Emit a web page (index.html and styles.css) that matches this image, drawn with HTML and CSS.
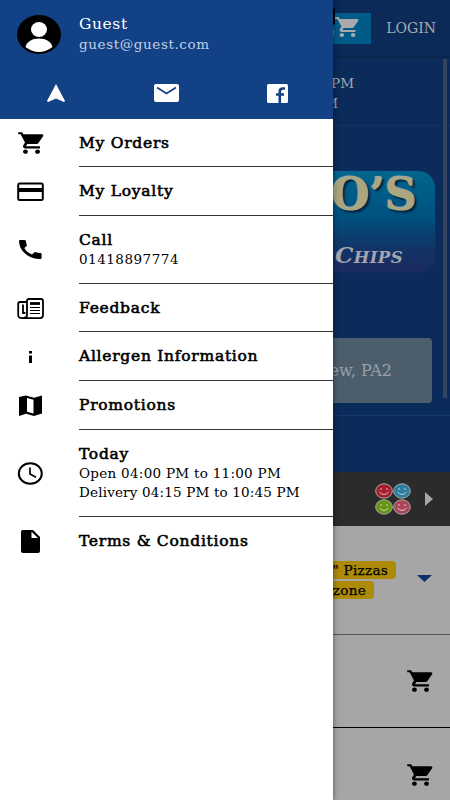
FILE: index.html
```html
<!DOCTYPE html>
<html lang="en">
<head>
  <meta charset="UTF-8">
  <meta name="viewport" content="width=device-width, initial-scale=1.0">
  <title>Menu</title>
  <link rel="stylesheet" href="styles.css">
</head>
<body>

  <svg class="sprite">
    <symbol id="cart" viewBox="0 0 24 24" preserveAspectRatio="none">
      <path d="M7 18c-1.1 0-2 .9-2 2s.9 2 2 2 2-.9 2-2-.9-2-2-2zM1 2v2h2l3.6 7.6-1.4 2.4C4.5 15.4 5.500 17 7 17h12v-2H7.400l1.150-2h7.450c.75 0 1.400-.4 1.750-1L21.700 5.500C22 4.800 21.500 4 20.700 4H5.200l-.9-2H1zm16 16c-1.100 0-2 .9-2 2s.9 2 2 2 2-.9 2-2-.9-2-2-2z"/>
    </symbol>
  </svg>

  <main class="page">
    <header class="topbar">
      <div class="basket"><span>0</span><svg><use href="#cart"/></svg><i class="badge"></i></div>
      <span class="login">LOGIN</span>
    </header>

    <section class="hero">
      <div class="times"><div>11:00 PM</div><div class="short">10:45 PM</div></div>
      <div class="brand">
        <div class="logo">
          <div class="logo-name">O’S</div>
          <div class="logo-sub"><b>C</b>HIPS</div>
        </div>
        <div class="address">Renfrew, PA2</div>
      </div>
      <div class="scrollbar"></div>
    </section>

    <div class="allergens">
      <svg class="faces" viewBox="0 0 36 32">
        <g stroke="#aaa" stroke-width="1">
          <ellipse cx="9" cy="8" rx="8.300" ry="7.200" fill="#a61d2b"/>
          <ellipse cx="27" cy="8" rx="8.300" ry="7.200" fill="#2a7fa0"/>
          <ellipse cx="9" cy="24" rx="8.300" ry="7.200" fill="#659510"/>
          <ellipse cx="27" cy="24" rx="8.300" ry="7.200" fill="#ac4656"/>
        </g>
        <g fill="none" stroke="#ccc" stroke-width="1">
          <path d="M6 5v2M12 5v2M4.500 9q4.500 5 9 0M24 5v2M30 5v2M22.500 9q4.500 5 9 0M6 21v2M12 21v2M4.500 25q4.500 5 9 0M24 21v2M30 21v2M22.500 25q4.500 5 9 0"/>
        </g>
      </svg>
      <svg class="next" viewBox="0 0 8 14"><path d="M0 0l8 7-8 7z"/></svg>
    </div>

    <div class="category">
      <div class="tags">
        <span class="tag">12" Pizzas</span>
        <span class="tag small">Calzone</span>
      </div>
      <svg class="expand" viewBox="0 0 15 7"><path d="M0 0h15L7.500 7z"/></svg>
    </div>
    <div class="product"><svg><use href="#cart"/></svg></div>
    <div class="product last"><svg><use href="#cart"/></svg></div>
  </main>

  <aside class="drawer">
    <div class="account">
      <div class="user">
        <svg class="avatar" viewBox="0 0 44 39">
          <ellipse cx="22" cy="19.500" rx="22" ry="19.500"/>
          <ellipse cx="22" cy="14.500" rx="8" ry="7.500" fill="#fff"/>
          <path d="M8.500 32C10 26.500 15 23.500 22 23.500S34 26.500 35.500 32Q29 37 22 37T8.500 32z" fill="#fff"/>
        </svg>
        <div>
          <div class="name">Guest</div>
          <div class="email">guest@guest.com</div>
        </div>
      </div>
      <div class="links">
        <svg class="nav-icon" viewBox="0 0 18 18"><path d="M9 0l9 17-1 1-8-3.500L1 18l-1-1z"/></svg>
        <svg class="mail-icon" viewBox="0 0 25 18"><rect width="25" height="18" rx="2"/><path d="M3 3.500l9.500 6 9.500-6" fill="none" stroke="#124186" stroke-width="1.800"/></svg>
        <svg class="fb-icon" viewBox="0 0 21 19"><rect width="21" height="19" rx="1.500"/><path d="M12.800 19v-8.500M9 10.500h8M12.800 11V7.500q0-3 3-3H18" fill="none" stroke="#124186" stroke-width="2.600"/></svg>
      </div>
    </div>

    <ul class="menu">
      <li class="item orders">
        <svg class="cart-icon"><use href="#cart"/></svg>
        <div class="text"><h2>My Orders</h2></div>
      </li>
      <li class="item">
        <svg viewBox="0 0 27 23"><rect x="1.200" y="3.500" width="24.600" height="16.500" rx="1.500" fill="none" stroke="#000" stroke-width="2"/><path d="M1 8h25v4H1z"/></svg>
        <div class="text"><h2>My Loyalty</h2></div>
      </li>
      <li class="item call">
        <svg viewBox="0 0 27 23"><path d="M3 2h4.500q1.300 0 1.400 1 .2 2 .9 3.700.3.900-.4 1.500L7.300 10q2.500 4.500 7.700 6.500l2.200-2q.7-.6 1.600-.3 2 .6 4.800.8 1 .1 1 1v4q0 1-1.200 1Q14 21 8 15.500T2 3q0-1 1-1z"/></svg>
        <div class="text"><h2>Call</h2><p class="phone">01418897774</p></div>
      </li>
      <li class="item">
        <svg viewBox="0 0 27 23" fill="none" stroke="#000"><path d="M9.500 5H3Q1.200 5 1.200 7v11q0 3 4 3.200h17.800q3-.2 3-3.200V4q0-2-2-2H12q-2 0-2 2v14q0 3-3.500 3M6 7.500V16h2.500" stroke-width="1.800"/><path d="M13 6.500h10" stroke-width="2.800"/><path d="M13 10.500h10M13 13.500h10M13 16.500h10" stroke-width="1.200"/></svg>
        <div class="text"><h2>Feedback</h2></div>
      </li>
      <li class="item">
        <svg viewBox="0 0 27 23"><path d="M12 6h3v2.500h-3zM12 10.500h3V18h-3z"/></svg>
        <div class="text"><h2>Allergen Information</h2></div>
      </li>
      <li class="item">
        <svg viewBox="0 0 27 23"><path d="M2 3l7-1.500 8 2.200 8-2.200v18L17 22l-8-2.200L2 22z"/><path d="M10 4l6.500 1.800v13.700L10 17.700z" fill="#fff"/></svg>
        <div class="text"><h2>Promotions</h2></div>
      </li>
      <li class="item today">
        <svg viewBox="0 0 27 23"><ellipse cx="13.300" cy="11.500" rx="11.500" ry="10.300" fill="none" stroke="#000" stroke-width="2"/><path d="M13 5.500v6.500l6 3.200" fill="none" stroke="#000" stroke-width="1.700"/></svg>
        <div class="text"><h2>Today</h2><p class="open">Open 04:00 PM to 11:00 PM</p><p class="delivery">Delivery 04:15 PM to 10:45 PM</p></div>
      </li>
      <li class="item">
        <svg viewBox="0 0 27 23"><path d="M5.500 0H16l7 7v14q0 2-2 2H6q-2 0-2-2V2q0-2 1.500-2z"/><path d="M14.500 1.800V8H21z" fill="#fff"/></svg>
        <div class="text"><h2>Terms &amp; Conditions</h2></div>
      </li>
    </ul>
  </aside>

</body>
</html>
```
FILE: styles.css
```css
* {
  box-sizing: border-box;
}

body {
  margin: 0;
  height: 800px;
  position: relative;
  overflow: hidden;
  font-family: "DejaVu Serif", serif;
  font-size: 13.5px;
  color: #000;
}

h2, p, ul {
  margin: 0;
  padding: 0;
}

svg {
  display: block;
  flex: none;
}

.sprite {
  display: none;
}

/* page behind the drawer */
.page {
  height: 800px;
  background: #a6a6a6;
  overflow: hidden;
}

.topbar {
  height: 58px;
  display: flex;
  align-items: center;
  justify-content: flex-end;
  gap: 15px;
  padding-right: 14px;
  background: #0b2a58;
  border-bottom: 2px solid #0a254e;
  color: #a6abb4;
}

.basket {
  position: relative;
  width: 60px;
  height: 31px;
  display: flex;
  align-items: center;
  justify-content: flex-end;
  padding-right: 10px;
  background: #015b88;
  color: #a6a6a6;
}

.basket span {
  margin-top: 9px;
  font-size: 15px;
}

.basket svg {
  width: 27px;
  height: 24px;
  margin-bottom: 2px;
  fill: #aaa;
}

.badge {
  position: absolute;
  top: -5px;
  right: 36px;
  width: 18px;
  height: 17px;
  background: #000;
  border-radius: 2px;
}

.login {
  font-size: 14px;
}

.hero {
  height: 414px;
  position: relative;
  background: #0b2b5a;
  color: #a3a8b1;
}

.times {
  height: 68px;
  padding: 15px 96px 0 0;
  line-height: 20px;
  text-align: right;
  border-bottom: 1px solid #15335f;
}

.times .short {
  margin-right: 16px;
}

.brand {
  height: 290px;
  padding: 44px 14px 0 0;
  display: flex;
  flex-direction: column;
  align-items: flex-end;
  border-bottom: 1px solid #15396b;
}

.logo {
  width: 300px;
  height: 103px;
  border: 1px solid #122d63;
  border-radius: 18px;
  background: linear-gradient(#00668e, #00517f 45%, #123365 78%, #1c2a62);
  text-align: right;
}

.logo-name {
  padding-right: 18px;
  font-size: 44px;
  line-height: 48px;
  font-weight: bold;
  letter-spacing: 0;
  color: #aaa67f;
  text-shadow: -1px -1px 1px #aeb1ac, 2px 2px 2px #02223e;
}

.logo-sub {
  padding: 22px 32px 0 0;
  font-size: 16.5px;
  line-height: 28px;
  font-weight: bold;
  font-style: italic;
  letter-spacing: 0.4px;
  color: #a4a5b0;
}

.logo-sub b {
  font-size: 23px;
}

.address {
  width: 380px;
  height: 65px;
  margin: 65px 4px 0 0;
  padding-right: 40px;
  line-height: 65px;
  font-size: 16px;
  text-align: right;
  color: #99a2a9;
  background: #4c5d6c;
  border-radius: 4px;
}

.scrollbar {
  position: absolute;
  top: 1px;
  right: 3px;
  width: 4px;
  height: 339px;
  background: #34435e;
}

.allergens {
  height: 54px;
  padding-right: 17px;
  display: flex;
  align-items: center;
  justify-content: flex-end;
  gap: 14px;
  background: #2b2b2b;
}

.faces {
  width: 36px;
  height: 32px;
}

.next {
  width: 8px;
  height: 14px;
  fill: #a6a6a6;
}

.category {
  height: 109px;
  padding: 0 18px 0 0;
  display: flex;
  align-items: center;
  justify-content: flex-end;
  gap: 21px;
  border-bottom: 1px solid #555;
}

.tags {
  display: flex;
  flex-direction: column;
  align-items: flex-end;
  gap: 2px;
}

.tag {
  height: 18px;
  padding: 0 8px;
  line-height: 18px;
  font-size: 13.5px;
  letter-spacing: 0.3px;
  background: #ad8a08;
  border-radius: 4px;
  -webkit-text-stroke: 0.25px #000;
}

.tag.small {
  margin-right: 22px;
}

.expand {
  width: 15px;
  height: 7px;
  margin-bottom: 4px;
  fill: #0c2f6c;
}

.product {
  height: 93px;
  padding-right: 15px;
  display: flex;
  align-items: center;
  justify-content: flex-end;
  border-bottom: 1px solid #000;
}

.product svg {
  width: 29px;
  height: 26px;
}

.product.last {
  border-bottom: 0;
}

/* drawer */
.drawer {
  position: absolute;
  top: 0;
  left: 0;
  width: 333px;
  height: 800px;
  background: #fff;
  box-shadow: 0 0 6px rgba(0, 0, 0, 0.5);
}

.account {
  height: 119px;
  background: #124186;
  color: #fff;
}

.user {
  height: 68px;
  padding-left: 17px;
  display: flex;
  align-items: center;
  gap: 18px;
}

.avatar {
  width: 44px;
  height: 39px;
}

.name {
  font-size: 15.5px;
  line-height: 20px;
  letter-spacing: 0.6px;
}

.email {
  font-size: 13.5px;
  line-height: 20px;
  letter-spacing: 0.6px;
  color: #c4d0e3;
}

.links {
  height: 50px;
  display: grid;
  grid-template-columns: repeat(3, 111px);
  align-items: center;
  justify-items: center;
  fill: #fff;
}

.nav-icon {
  width: 18px;
  height: 18px;
}

.mail-icon {
  width: 25px;
  height: 18px;
}

.fb-icon {
  width: 21px;
  height: 19px;
}

.menu {
  list-style: none;
}

.item {
  height: 48.7px;
  padding-left: 17px;
  display: flex;
  align-items: center;
  gap: 35px;
}

.item svg {
  width: 27px;
  height: 23px;
}

.item .cart-icon {
  width: 29px;
  height: 26px;
  margin-right: -2px;
}

.text {
  height: 100%;
  flex: 1;
  display: flex;
  flex-direction: column;
  justify-content: center;
  border-bottom: 1px solid #333;
}

.item:last-child .text {
  border-bottom: 0;
}

.text h2 {
  font-size: 15.5px;
  line-height: 20px;
  font-weight: normal;
  letter-spacing: 0.73px;
  -webkit-text-stroke: 0.6px #000;
}

.text p {
  font-size: 13.5px;
  line-height: 19px;
}

.text .phone {
  letter-spacing: 0.5px;
}

.text .open {
  letter-spacing: 0.28px;
}

.text .delivery {
  letter-spacing: 0.17px;
}

.item.orders {
  height: 48px;
}

.item.call {
  height: 68px;
}

.item.today {
  height: 87px;
}
```
